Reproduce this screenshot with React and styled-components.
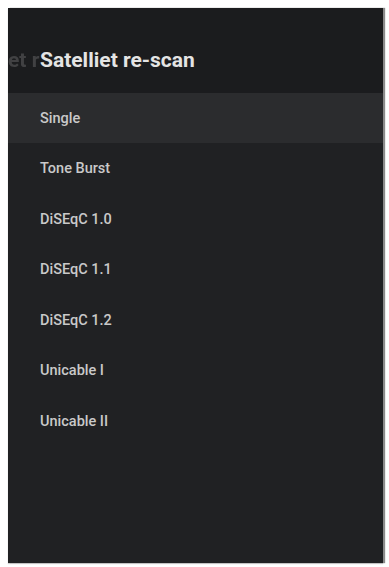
import React from "react";
import styled, { createGlobalStyle } from "styled-components";

const Global = createGlobalStyle`
  html, body { margin: 0; padding: 0; background: #ffffff; }
  body { font-family: Roboto, "Noto Sans", Arial, sans-serif; }
`;

const Page = styled.div`
  padding: 8px 6px 4px 8px;
`;

const Panel = styled.div`
  width: 375px;
  height: 555px;
  background: #202123;
  box-shadow: 2px 0 1px #8a8a8a, 0 1px 1px #cfcfcf;
  display: flex;
  flex-direction: column;
  overflow: hidden;
`;

const Header = styled.div`
  position: relative;
  height: 84.5px;
  background: #1b1c1e;
  display: flex;
  align-items: center;
  padding-left: 32px;
  padding-top: 20px;
  box-sizing: border-box;
`;

const Title = styled.h1`
  margin: 0;
  font-size: 21px;
  font-weight: 700;
  color: #e4e4e4;
  position: relative;
`;

const Ghost = styled.span`
  position: absolute;
  left: 0;
  top: 50%;
  margin-top: 10px;
  transform: translateY(-50%);
  font-size: 21px;
  font-weight: 700;
  color: rgba(200, 200, 200, 0.22);
  white-space: nowrap;
  filter: blur(0.7px);
`;

const List = styled.ul`
  list-style: none;
  margin: 0;
  padding: 0;
`;

const Item = styled.li`
  height: 50.5px;
  display: flex;
  align-items: center;
  padding-left: 32px;
  padding-top: 1px;
  box-sizing: border-box;
  font-size: 14.5px;
  font-weight: 500;
  color: #c9c9c9;
  background: ${(p) => (p.$selected ? "#2b2c2e" : "transparent")};
`;

const items = [
  "Single",
  "Tone Burst",
  "DiSEqC 1.0",
  "DiSEqC 1.1",
  "DiSEqC 1.2",
  "Unicable I",
  "Unicable II",
];

export default function App() {
  return (
    <>
      <Global />
      <Page>
        <Panel>
          <Header>
            <Ghost>et r</Ghost>
            <Title>Satelliet re-scan</Title>
          </Header>
          <List>
            {items.map((t, i) => (
              <Item key={t} $selected={i === 0}>
                {t}
              </Item>
            ))}
          </List>
        </Panel>
      </Page>
    </>
  );
}
